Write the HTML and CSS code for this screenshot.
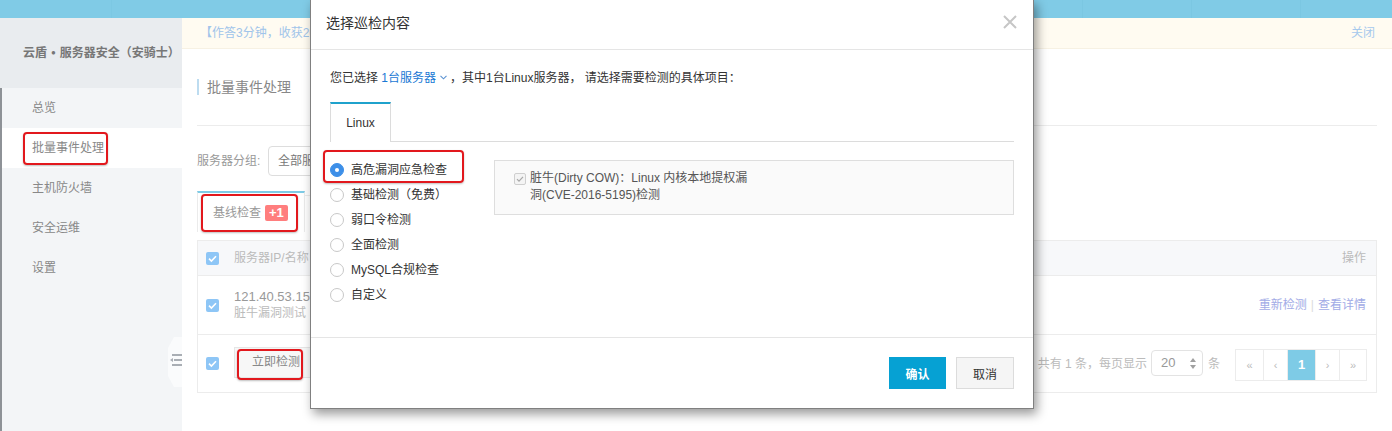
FILE: index.html
```html
<!DOCTYPE html>
<html lang="zh-CN">
<head>
<meta charset="utf-8">
<title>批量事件处理</title>
<link rel="stylesheet" href="styles.css">
</head>
<body>
<div class="page">
  <header class="topbar">
    <div class="topbar-logo"></div>
    <div class="topbar-fill"></div>
    <div class="topbar-seg"></div>
    <div class="topbar-seg"></div>
    <div class="topbar-end"></div>
  </header>
  <div class="layout">
    <aside class="sidebar">
      <div class="brand">云盾 <span class="dot">●</span> 服务器安全（安骑士）</div>
      <nav class="nav">
        <a class="nav-item">总览</a>
        <a class="nav-item active">批量事件处理<span class="mark mark-nav"></span></a>
        <a class="nav-item">主机防火墙</a>
        <a class="nav-item">安全运维</a>
        <a class="nav-item">设置</a>
      </nav>
      <div class="collapse">
        <svg width="14" height="50" viewBox="0 0 14 50">
          <polygon points="0,11 6,0 14,0 14,50 6,50 0,39" fill="#fafbfc"/>
          <rect x="4" y="17" width="10" height="2" fill="#a9aeb4"/>
          <polygon points="2,23 5,21 5,25" fill="#a9aeb4"/>
          <rect x="6" y="22" width="8" height="2" fill="#a9aeb4"/>
          <rect x="4" y="27" width="10" height="2" fill="#a9aeb4"/>
        </svg>
      </div>
    </aside>
    <main class="main">
      <div class="notice">
        <span class="notice-text">【作答3分钟，收获20元代金券】</span>
        <a class="notice-close">关闭</a>
      </div>
      <div class="content">
        <div class="page-head"><h1 class="page-title">批量事件处理</h1></div>
        <div class="filter">
          <span class="filter-label">服务器分组:</span>
          <div class="filter-select">全部服务器</div>
        </div>
        <div class="tabs">
          <div class="tab active">基线检查<span class="badge">+1</span><span class="mark mark-tab"></span></div>
          <div class="tab"></div>
        </div>
        <div class="table">
          <div class="row head">
            <div class="cell-check"><span class="cb"><svg width="13" height="13" viewBox="0 0 13 13"><path d="M3 6.6l2.4 2.4L10 4.2" fill="none" stroke="#fff" stroke-width="1.6"/></svg></span></div>
            <div class="cell-name">服务器IP/名称</div>
            <div class="cell-op">操作</div>
          </div>
          <div class="row body">
            <div class="cell-check"><span class="cb"><svg width="13" height="13" viewBox="0 0 13 13"><path d="M3 6.6l2.4 2.4L10 4.2" fill="none" stroke="#fff" stroke-width="1.6"/></svg></span></div>
            <div class="cell-name">
              <div class="ip">121.40.53.157</div>
              <div class="host">脏牛漏洞测试</div>
            </div>
            <div class="cell-op links"><a>重新检测</a><span class="sep">|</span><a>查看详情</a></div>
          </div>
          <div class="row foot">
            <div class="cell-check"><span class="cb"><svg width="13" height="13" viewBox="0 0 13 13"><path d="M3 6.6l2.4 2.4L10 4.2" fill="none" stroke="#fff" stroke-width="1.6"/></svg></span></div>
            <div class="run-btn">立即检测<span class="mark mark-btn"></span></div>
            <div class="pager-info">
              <span class="total">共有 1 条，每页显示</span>
              <div class="size-select">20
                <svg class="size-arrows" width="6" height="11" viewBox="0 0 6 11"><polygon points="3,0 6,4 0,4" fill="#a0a0a0"/><polygon points="0,7 6,7 3,11" fill="#a0a0a0"/></svg>
              </div>
              <span class="unit">条</span>
              <div class="pager">
                <a class="pg pg-edge">«</a><a class="pg pg-step">‹</a><a class="pg pg-num current">1</a><a class="pg pg-step">›</a><a class="pg pg-edge">»</a>
              </div>
            </div>
          </div>
        </div>
      </div>
    </main>
  </div>

  <div class="modal">
    <div class="modal-head">
      <h2 class="modal-title">选择巡检内容</h2>
      <a class="modal-close"><svg width="14" height="14" viewBox="0 0 14 14"><path d="M1 1L13 13M13 1L1 13" stroke="#c6c6c6" stroke-width="2"/></svg></a>
    </div>
    <div class="modal-body">
      <p class="intro">您已选择 <span class="link">1台服务器</span><svg class="chev" width="7" height="5" viewBox="0 0 7 5"><path d="M0.5 0.8L3.5 3.8L6.5 0.8" fill="none" stroke="#5c93d2" stroke-width="1.1"/></svg>，其中1台Linux服务器， 请选择需要检测的具体项目：</p>
      <div class="m-tabs">
        <div class="m-tab active">Linux</div>
      </div>
      <div class="panel">
        <ul class="radios">
          <li class="radio-row"><span class="radio checked"></span>高危漏洞应急检查<span class="mark mark-radio"></span></li>
          <li class="radio-row"><span class="radio"></span>基础检测（免费）</li>
          <li class="radio-row"><span class="radio"></span>弱口令检测</li>
          <li class="radio-row"><span class="radio"></span>全面检测</li>
          <li class="radio-row"><span class="radio"></span>MySQL合规检查</li>
          <li class="radio-row"><span class="radio"></span>自定义</li>
        </ul>
        <div class="items">
          <label class="item">
            <span class="cb-dis"><svg width="12" height="12" viewBox="0 0 12 12"><path d="M3 6.2l2 2L9 3.8" fill="none" stroke="#a8a8a8" stroke-width="1.2"/></svg></span>
            <span class="item-text">脏牛(Dirty COW)：Linux 内核本地提权漏洞(CVE-2016-5195)检测</span>
          </label>
        </div>
      </div>
    </div>
    <div class="modal-foot">
      <button class="btn btn-primary">确认</button>
      <button class="btn btn-default">取消</button>
    </div>
  </div>
</div>
</body>
</html>
```
FILE: styles.css
```css
* { box-sizing: border-box; margin: 0; padding: 0; }
html, body { width: 1392px; height: 431px; overflow: hidden; background: #fff; }
body {
  font-family: "Liberation Sans", "Noto Sans CJK SC", sans-serif;
  font-size: 12px;
  line-height: 18px;
  color: #333;
}
a { text-decoration: none; cursor: pointer; }
ul { list-style: none; }
button { font-family: inherit; }

.page { position: relative; width: 1392px; height: 431px; overflow: hidden; }

/* top bar */
.topbar { height: 18px; background: #80cbe6; display: flex; }
.topbar-logo { width: 112px; border-right: 1px solid #7cc8e3; }
.topbar-fill { flex: 1; }
.topbar-seg { width: 109px; border-left: 1px solid #7bc7e2; }
.topbar-end { width: 92px; border-left: 1px solid #7bc7e2; }

.layout { display: flex; height: 413px; }

/* sidebar */
.sidebar { position: relative; width: 182px; flex: none; display: flex; flex-direction: column; background: #f3f5f7; }
.brand {
  height: 70px; display: flex; align-items: center; padding-left: 23px;
  background: #e9ecef; color: #777; font-weight: bold; font-size: 12px; white-space: nowrap;
}
.brand .dot { font-size: 8px; margin: 0 4px; }
.nav { flex: 1; border-left: 2px solid #8e9297; }
.nav-item {
  position: relative; display: block; height: 40px; line-height: 40px;
  padding-left: 30px; color: #888; font-size: 12px;
}
.nav-item.active { background: #fff; }
.collapse { position: absolute; left: 168px; top: 319px; width: 14px; height: 50px; }
.collapse svg { display: block; }

/* annotation marks */
.mark {
  position: absolute; border: 2px solid #e2181d; border-radius: 4px;
  box-shadow: 0 1px 2px rgba(0, 0, 0, .25); pointer-events: none;
}
.mark-nav { left: 21px; top: 4px; width: 85px; height: 33px; }
.mark-tab { left: 3px; top: 1px; width: 97px; height: 38px; }
.mark-btn { left: 2px; top: 1px; width: 66px; height: 31px; }
.mark-radio { left: -7px; top: -7px; width: 141px; height: 33px; }

/* main */
.main { flex: 1; display: flex; flex-direction: column; background: #fff; min-width: 0; }
.notice {
  height: 31px; flex: none; display: flex; align-items: center; justify-content: space-between;
  padding: 0 17px 0 18px; background: #fffbf1; border-bottom: 1px solid #f7f1e3;
}
.notice-text { color: #a0c4ea; white-space: nowrap; width: 110px; overflow: hidden; }
.notice-close { color: #a6c9ed; }

.content { padding: 0 15px; }
.page-head { height: 77px; display: flex; align-items: center; border-bottom: 1px solid #ececec; }
.page-title {
  font-size: 14px; font-weight: normal; line-height: 16px; color: #888;
  border-left: 2px solid #bddcf0; padding-left: 8px;
}

.filter { display: flex; align-items: center; margin-top: 20px; height: 30px; }
.filter-label { color: #999; width: 71px; }
.filter-select {
  width: 180px; height: 30px; line-height: 28px; border: 1px solid #ddd; border-radius: 4px;
  padding-left: 9px; color: #777;
}

.tabs { display: flex; margin-top: 15px; height: 41px; }
.tab {
  position: relative; height: 41px; display: flex; align-items: center;
  color: #999; border: 1px solid #ebebeb; border-bottom: none;
}
.tab.active { width: 108px; padding-left: 15px; border-top: 2px solid #7ecbe6; }
.tab + .tab { width: 110px; padding-left: 15px; border-left: none; margin-top: 4px; height: 37px; }
.badge {
  display: inline-block; margin-left: 4px; height: 16px; line-height: 16px; padding: 0 4px;
  background: #ff7e7e; color: #fff; font-weight: bold; font-size: 13px; border-radius: 2px;
}

.table { margin-top: 8px; border: 1px solid #ececec; }
.row { display: flex; align-items: center; border-bottom: 1px solid #ececec; }
.row:last-child { border-bottom: none; }
.row.head { height: 35px; background: #f7f8fa; }
.row.body { height: 59px; }
.row.foot { height: 57px; }
.cell-check { width: 36px; flex: none; padding-left: 8px; display: flex; align-items: center; }
.cb { display: block; width: 13px; height: 13px; border-radius: 2px; background: #8ec6f6; }
.cb svg { display: block; }
.cell-name { color: #bbb; flex: 1; }
.ip { color: #999; font-size: 13px; line-height: 17px; }
.host { color: #bbb; font-size: 12px; line-height: 17px; }
.cell-op { margin-left: auto; padding-right: 10px; color: #bbb; }
.links a { color: #a2abe6; }
.links .sep { color: #dcdcdc; margin: 0 4px; }

.run-btn {
  position: relative; width: 82px; height: 31px; line-height: 29px; padding-left: 17px;
  background: #f7f7f7; border: 1px solid #e6e6e6; color: #888; margin-top: -2px;
}
.pager-info { margin-left: auto; padding-right: 9px; display: flex; align-items: center; color: #bbb; }
.total { margin-right: 4px; }
.size-select {
  position: relative; width: 52px; height: 26px; line-height: 24px; border: 1px solid #e3e3e3; border-radius: 4px;
  padding-left: 9px; color: #999; font-size: 13px; margin-top: -1px;
}
.size-arrows { position: absolute; right: 6px; top: 7px; }
.unit { margin-left: 5px; margin-right: 15px; }
.pager { display: flex; height: 32px; border: 1px solid #ececec; margin-top: 2px; }
.pg {
  display: flex; align-items: center; justify-content: center; height: 30px;
  color: #bbb; font-size: 11px; border-left: 1px solid #ececec;
}
.pg:first-child { border-left: none; }
.pg-edge { width: 27px; }
.pg-step { width: 24px; }
.pg-num { width: 28px; }
.pg.current { background: #7ecbe6; color: #fff; font-weight: bold; font-size: 13px; }

/* modal */
.modal {
  position: absolute; left: 310px; top: -1px; width: 724px; height: 410px;
  background: #fff; border: 1px solid #808080;
  box-shadow: 3px 5px 10px rgba(0, 0, 0, .4);
  display: flex; flex-direction: column;
}
.modal-head {
  height: 50px; flex: none; display: flex; justify-content: space-between; align-items: flex-start;
  padding: 14px 16px 0 15px; border-bottom: 1px solid #e5e5e5;
}
.modal-title { font-size: 14px; font-weight: normal; line-height: 18px; color: #333; }
.modal-close { display: block; margin-top: 1px; }
.modal-close svg { display: block; }

.modal-body { flex: 1; padding: 19px 19px 0 19px; }
.intro { color: #333; line-height: 18px; white-space: nowrap; }
.intro .link { color: #1a78d4; }
.chev { margin: 0 3px 2px 4px; vertical-align: middle; }

.m-tabs { display: flex; margin-top: 15px; height: 40px; border-bottom: 1px solid #dcdcdc; }
.m-tab {
  width: 61px; height: 40px; margin-bottom: -1px; background: #fff;
  border-top: 2px solid #1fa2cc; border-left: 1px solid #dcdcdc; border-right: 1px solid #dcdcdc;
  display: flex; align-items: center; justify-content: center; color: #333;
}

.panel { display: flex; align-items: flex-start; padding-top: 15px; }
.radios { width: 164px; flex: none; }
.radio-row { position: relative; height: 25px; display: flex; align-items: center; color: #333; white-space: nowrap; }
.radio {
  width: 14px; height: 14px; border-radius: 50%; border: 1px solid #c8c8c8; background: #fff;
  margin-right: 7px; flex: none; position: relative;
}
.radio.checked { background: #3d8fe8; border-color: #3d8fe8; }
.radio.checked::after {
  content: ""; position: absolute; left: 4px; top: 4px; width: 4px; height: 4px; border-radius: 50%; background: #fff;
}
.items {
  flex: 1; margin-top: 3px; height: 55px; background: #fafafa; border: 1px solid #dedede;
  padding: 9px 19px 0 19px;
}
.item { display: flex; align-items: flex-start; color: #555; }
.cb-dis {
  width: 12px; height: 12px; margin-top: 3px; margin-right: 4px; flex: none;
  border: 1px solid #cfcfcf; border-radius: 2px; background: #f4f4f4;
}
.cb-dis svg { display: block; margin: -1px; }
.item-text { width: 224px; line-height: 17px; }

.modal-foot {
  height: 71px; flex: none; border-top: 1px solid #e5e5e5;
  display: flex; justify-content: flex-end; align-items: flex-start; padding: 19px 19px 0 0;
}
.btn { height: 32px; font-size: 12px; cursor: pointer; }
.btn-primary { width: 57px; background: #06a1d3; color: #fff; font-weight: bold; border: none; }
.btn-default { width: 58px; margin-left: 10px; background: #f5f5f5; color: #333; border: 1px solid #dcdcdc; }
```
